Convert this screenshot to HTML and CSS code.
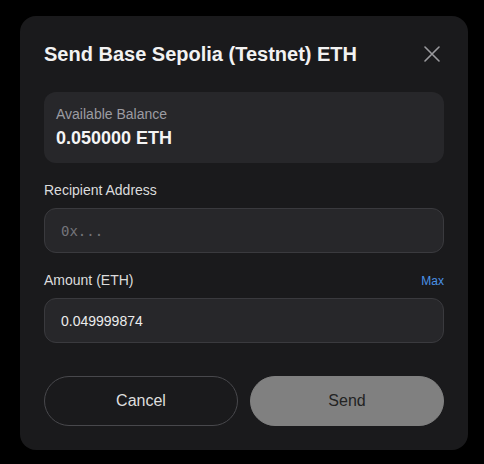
FILE: index.html
```html
<!DOCTYPE html>
<html>
<head>
<meta charset="utf-8">
<link rel="stylesheet" href="styles.css">
</head>
<body>
<div class="modal">
  <div class="header">
    <h1 class="title">Send Base Sepolia (Testnet) ETH</h1>
    <button class="close" aria-label="Close">
      <svg width="16" height="16" viewBox="0 0 16 16"><path d="M1 1L15 15M15 1L1 15" stroke="#9a9a9e" stroke-width="1.6" stroke-linecap="round"/></svg>
    </button>
  </div>
  <div class="balance">
    <div class="balance-label">Available Balance</div>
    <div class="balance-value">0.050000 ETH</div>
  </div>
  <div class="field">
    <div class="label-row"><span class="label">Recipient Address</span></div>
    <div class="input placeholder">0x...</div>
  </div>
  <div class="field">
    <div class="label-row"><span class="label">Amount (ETH)</span><span class="max">Max</span></div>
    <div class="input value">0.049999874</div>
  </div>
  <div class="actions">
    <button class="btn cancel">Cancel</button>
    <button class="btn send">Send</button>
  </div>
</div>
</body>
</html>
```

FILE: styles.css
```css
html, body {
  margin: 0;
  background: #000;
}
body {
  padding: 16px 16px 0 20px;
  font-family: "Liberation Sans", Arial, sans-serif;
}
.modal {
  width: 400px;
  padding: 24px;
  background: #1a1a1c;
  border-radius: 16px;
  display: flex;
  flex-direction: column;
}
.header {
  display: flex;
  align-items: center;
  justify-content: space-between;
  height: 28px;
}
.title {
  margin: 0;
  font-size: 20px;
  line-height: 28px;
  font-weight: 700;
  color: #f2f2f2;
}
.close {
  background: none;
  border: 0;
  padding: 0;
  width: 16px;
  height: 16px;
  margin-right: 4px;
  display: flex;
}
.balance {
  margin-top: 24px;
  background: #27272a;
  border-radius: 12px;
  padding: 12px 12px 13px;
  display: flex;
  flex-direction: column;
  gap: 2px;
}
.balance-label {
  font-size: 14px;
  line-height: 20px;
  color: #9c9ca2;
}
.balance-value {
  font-size: 18px;
  line-height: 24px;
  font-weight: 700;
  color: #f4f4f4;
}
.field {
  margin-top: 17px;
  display: flex;
  flex-direction: column;
  gap: 8px;
}
.label-row {
  display: flex;
  justify-content: space-between;
  align-items: baseline;
  height: 20px;
}
.label {
  font-size: 14px;
  line-height: 20px;
  color: #dcdcdc;
}
.max {
  font-size: 12px;
  color: #4a92e6;
}
.input {
  height: 43px;
  box-sizing: content-box;
  border: 1px solid #3a3a3e;
  border-radius: 12px;
  background: #27272a;
  padding: 0 16px;
  display: flex;
  align-items: center;
  font-size: 14px;
}
.placeholder {
  font-family: "DejaVu Sans Mono", monospace;
  color: #74747a;
}
.value {
  color: #ececec;
}
.actions {
  margin-top: 33px;
  display: flex;
  gap: 12px;
}
.btn {
  flex: 1;
  height: 50px;
  border-radius: 25px;
  font-family: "Liberation Sans", Arial, sans-serif;
  font-size: 16px;
}
.cancel {
  background: transparent;
  border: 1px solid #48484c;
  color: #dedede;
}
.send {
  background: #808080;
  border: 1px solid #808080;
  color: #232323;
}
```
